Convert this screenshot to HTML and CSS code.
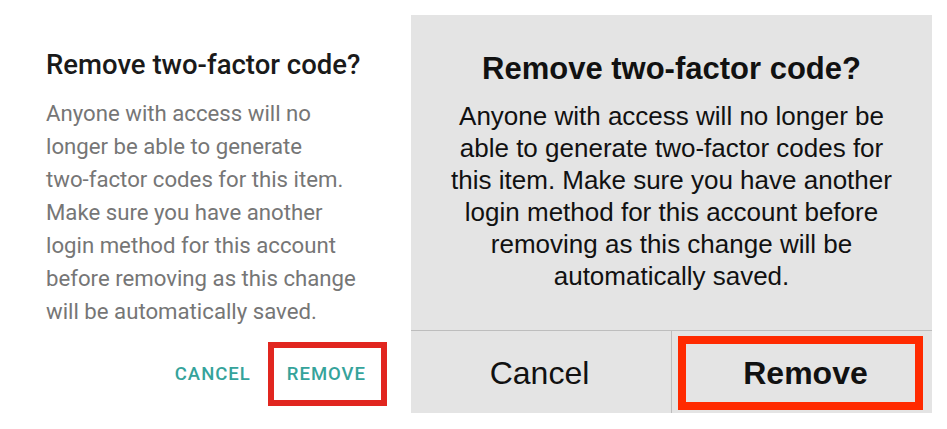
FILE: index.html
```html
<!DOCTYPE html>
<html lang="en">
  <head>
    <meta charset="UTF-8" />
    <meta name="viewport" content="width=device-width, initial-scale=1.0" />

    <title>Remove two-factor code</title>

    <link rel="stylesheet" href="styles.css">
  </head>

  <body>
    <div class="compare">
      <div class="android">
        <h2 class="android-title">Remove two-factor code?</h2>
        <p class="android-text">
          Anyone with access will no longer be able to generate <span class="nowrap">two-factor</span>
          codes for this item. Make sure you have another login method for this account before
          removing as this change will be automatically saved.
        </p>
        <div class="android-actions">
          <span class="android-btn">Cancel</span>
          <span class="android-btn marked">Remove</span>
        </div>
      </div>

      <div class="ios">
        <div class="ios-body">
          <h2 class="ios-title">Remove two-factor code?</h2>
          <p class="ios-text">
            Anyone with access will no longer be able to generate two-factor codes for this
            item. Make sure you have another login method for this account before removing as
            this change will be automatically saved.
          </p>
        </div>
        <div class="ios-actions">
          <div class="ios-cell">
            <span class="ios-btn">Cancel</span>
          </div>
          <div class="ios-cell">
            <span class="ios-btn bold marked">Remove</span>
          </div>
        </div>
      </div>
    </div>
  </body>
</html>
```

FILE: styles.css
```css
*,
*::before,
*::after {
  box-sizing: border-box;
}

body {
  margin: 0;
  background-color: #fff;
}

.compare {
  display: flex;
  align-items: flex-start;
}

.nowrap {
  white-space: nowrap;
}

/* android dialog */

.android {
  width: 411px;
  padding: 48px 24px 0 46px;
  font-family: Roboto, "Liberation Sans", sans-serif;
}

.android-title {
  margin: 0;
  font-size: 27.5px;
  line-height: 34px;
  font-weight: 500;
  color: #1a1a1a;
}

.android-text {
  margin: 15px 0 0;
  width: 320px;
  font-size: 22.2px;
  line-height: 33px;
  color: #767676;
}

.android-actions {
  display: flex;
  justify-content: flex-end;
  align-items: center;
  gap: 17px;
  margin-top: 14px;
}

.android-btn {
  font-size: 18.5px;
  font-weight: 500;
  letter-spacing: 1px;
  text-transform: uppercase;
  color: #35a39b;
}

.android-btn.marked {
  padding: 15px 15px 15px 13px;
  border: 6px solid #e1261f;
}

/* ios alert */

.ios {
  width: 521px;
  height: 398px;
  margin-top: 15px;
  display: flex;
  flex-direction: column;
  background-color: #e4e4e4;
  font-family: "Liberation Sans", Arial, sans-serif;
  color: #111;
  text-align: center;
}

.ios-body {
  flex: 1;
  padding: 36px 30px 0;
}

.ios-title {
  margin: 0;
  font-size: 31px;
  line-height: 36px;
  font-weight: 700;
}

.ios-text {
  margin: 13px 0 0;
  font-size: 26px;
  line-height: 32px;
}

.ios-actions {
  display: flex;
  height: 83px;
  border-top: 1px solid #bdbdbd;
}

.ios-cell {
  flex: 1;
  display: flex;
  padding: 5px 9px 3px 6px;
}

.ios-cell + .ios-cell {
  border-left: 1px solid #bdbdbd;
}

.ios-btn {
  flex: 1;
  display: flex;
  align-items: center;
  justify-content: center;
  font-size: 32px;
}

.ios-btn.bold {
  font-weight: 700;
}

.ios-btn.marked {
  padding-left: 10px;
  border: 8px solid #ff2a00;
}
```
